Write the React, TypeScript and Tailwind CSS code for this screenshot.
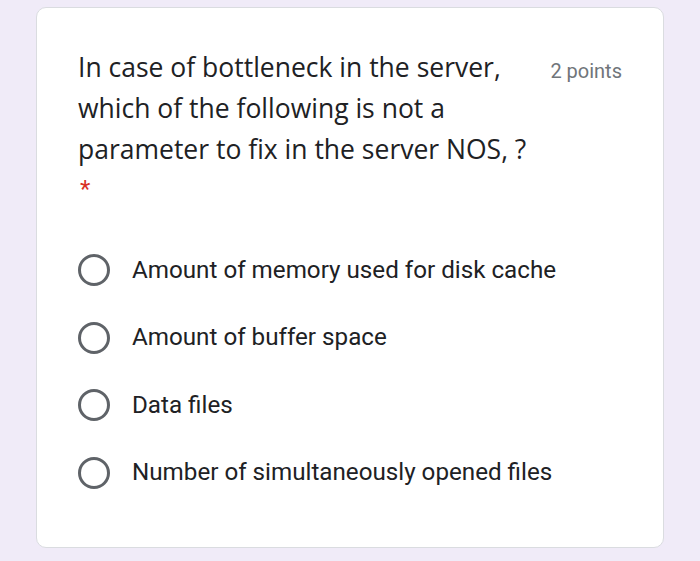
import React from "react";

const options = [
  "Amount of memory used for disk cache",
  "Amount of buffer space",
  "Data files",
  "Number of simultaneously opened files",
];

export default function App() {
  return (
    <div className="w-[700px] h-[561px] bg-[#f0ebf8] pt-[7px] pl-[36px]">
      <div className="w-[628px] h-[541px] bg-white rounded-[10px] border border-[#dadce0] pl-[41px] pr-[41px] pt-[39px]">
        <div className="flex justify-between">
          <div
            className="w-[450px] text-[26.5px] leading-[41px] text-[#202124]"
            style={{ fontFamily: '"Open Sans", sans-serif' }}
          >
            In case of bottleneck in the server, which of the following is not a parameter to fix in the server NOS, ?
          </div>
          <div
            className="text-[20px] leading-[41px] text-[#70757a] pt-[4px]"
            style={{ fontFamily: 'Roboto, sans-serif' }}
          >
            2 points
          </div>
        </div>
        <div className="text-[#d93025] text-[24px] leading-[24px] mt-[7px] pl-[2px]" style={{ fontFamily: 'Roboto, sans-serif' }}>*</div>
        <div className="mt-[53px] flex flex-col gap-[35.5px]" style={{ fontFamily: 'Roboto, sans-serif' }}>
          {options.map((o) => (
            <div key={o} className="flex items-center h-[32px]">
              <div className="w-[32px] h-[32px] rounded-full border-[3px] border-[#5f6368] box-border" />
              <span className="ml-[22px] text-[24.2px] text-[#202124]">{o}</span>
            </div>
          ))}
        </div>
      </div>
    </div>
  );
}
